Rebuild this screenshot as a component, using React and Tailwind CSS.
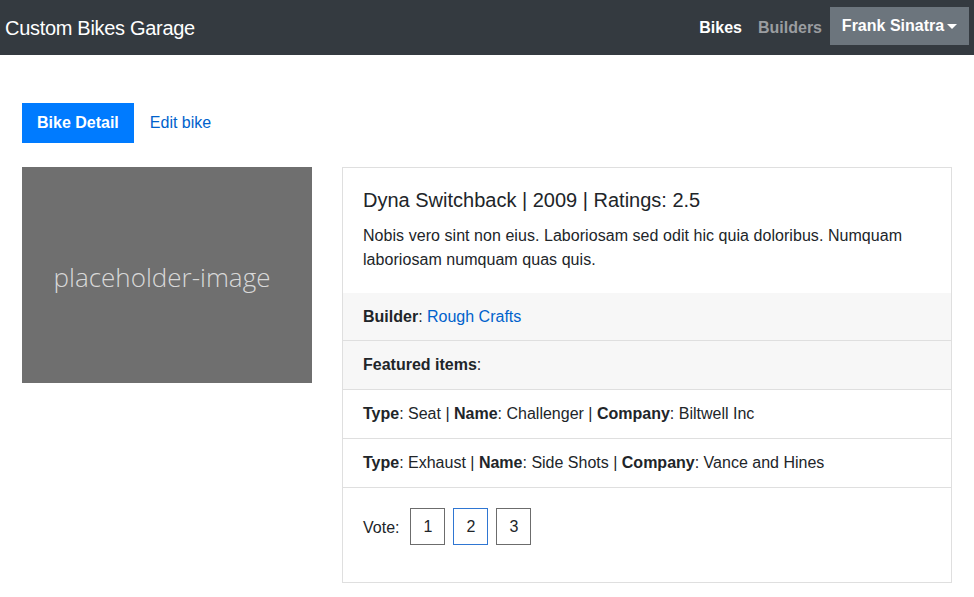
import React from "react";

const items = [
  { type: "Seat", name: "Challenger", company: "Biltwell Inc" },
  { type: "Exhaust", name: "Side Shots", company: "Vance and Hines" },
];

function App() {
  return (
    <div className="min-h-screen bg-white text-[#212529]" style={{ fontFamily: '"Liberation Sans", Arial, sans-serif' }}>
      {/* navbar */}
      <nav className="h-[55px] bg-[#343a40] flex items-center justify-between pl-[5px] pr-[5px]">
        <span className="text-[20px] text-white tracking-[-0.3px]">Custom Bikes Garage</span>
        <div className="flex items-center h-full">
          <span className="text-white font-bold text-[16px] mr-[16px]">Bikes</span>
          <span className="text-[#9a9da0] font-bold text-[16px] mr-[8px]">Builders</span>
          <span className="bg-[#6c757d] text-white font-bold text-[16px] h-[38px] w-[139px] flex items-center justify-center mt-[-3px]">
            Frank Sinatra
            <span className="ml-[3px] inline-block w-0 h-0 border-l-[5px] border-r-[5px] border-t-[5px] border-l-transparent border-r-transparent border-t-white"></span>
          </span>
        </div>
      </nav>

      <div className="px-[22px] pt-[48px]">
        {/* tabs */}
        <div className="flex items-center h-[40px]">
          <span className="bg-[#007bff] text-white font-bold text-[16px] h-full px-[15px] flex items-center">Bike Detail</span>
          <span className="text-[#0062cc] text-[16px] px-[16px]">Edit bike</span>
        </div>

        <div className="flex mt-[24px] gap-[30px]">
          <div className="w-[290px] h-[216px] bg-[#6f6f6f] flex items-center justify-center shrink-0">
            <span className="text-[#d8d8d8] text-[26px] font-light mr-[10px] mt-[4px]" style={{ fontFamily: '"Open Sans", sans-serif' }}>placeholder-image</span>
          </div>

          <div className="w-[610px] border border-[#dfdfdf]">
            <div className="px-[20px] pt-[20px] pb-[21px]">
              <h2 className="text-[20px] font-medium leading-[24px] mb-[12px]">Dyna Switchback | 2009 | Ratings: 2.5</h2>
              <p className="text-[16px] leading-[24px] tracking-[0.05px]">
                Nobis vero sint non eius. Laboriosam sed odit hic quia doloribus. Numquam laboriosam numquam quas quis.
              </p>
            </div>
            <div className="bg-[#f7f7f7] h-[48px] px-[20px] flex items-center text-[16px] border-b border-[#dfdfdf]">
              <b>Builder</b>:&nbsp;<span className="text-[#0062cc]">Rough Crafts</span>
            </div>
            <div className="bg-[#f7f7f7] h-[49px] px-[20px] flex items-center text-[16px] border-b border-[#dfdfdf]">
              <b>Featured items</b>:
            </div>
            {items.map((it) => (
              <div key={it.name} className="h-[49px] px-[20px] flex items-center text-[16px] border-b border-[#dfdfdf]">
                <b>Type</b>:&nbsp;{it.type}&nbsp;|&nbsp;<b>Name</b>:&nbsp;{it.name}&nbsp;|&nbsp;<b>Company</b>:&nbsp;{it.company}
              </div>
            ))}
            <div className="h-[94px] px-[20px] pt-[20px] flex items-start text-[16px]">
              <span className="mt-[8px] mr-[11px]">Vote:</span>
              <div className="flex gap-[8px]">
                <span className="w-[35px] h-[37px] border border-[#6c6c6c] flex items-center justify-center">1</span>
                <span className="w-[35px] h-[37px] border border-[#2f76d2] flex items-center justify-center">2</span>
                <span className="w-[35px] h-[37px] border border-[#6c6c6c] flex items-center justify-center">3</span>
              </div>
            </div>
          </div>
        </div>
      </div>
    </div>
  );
}

export default App;
